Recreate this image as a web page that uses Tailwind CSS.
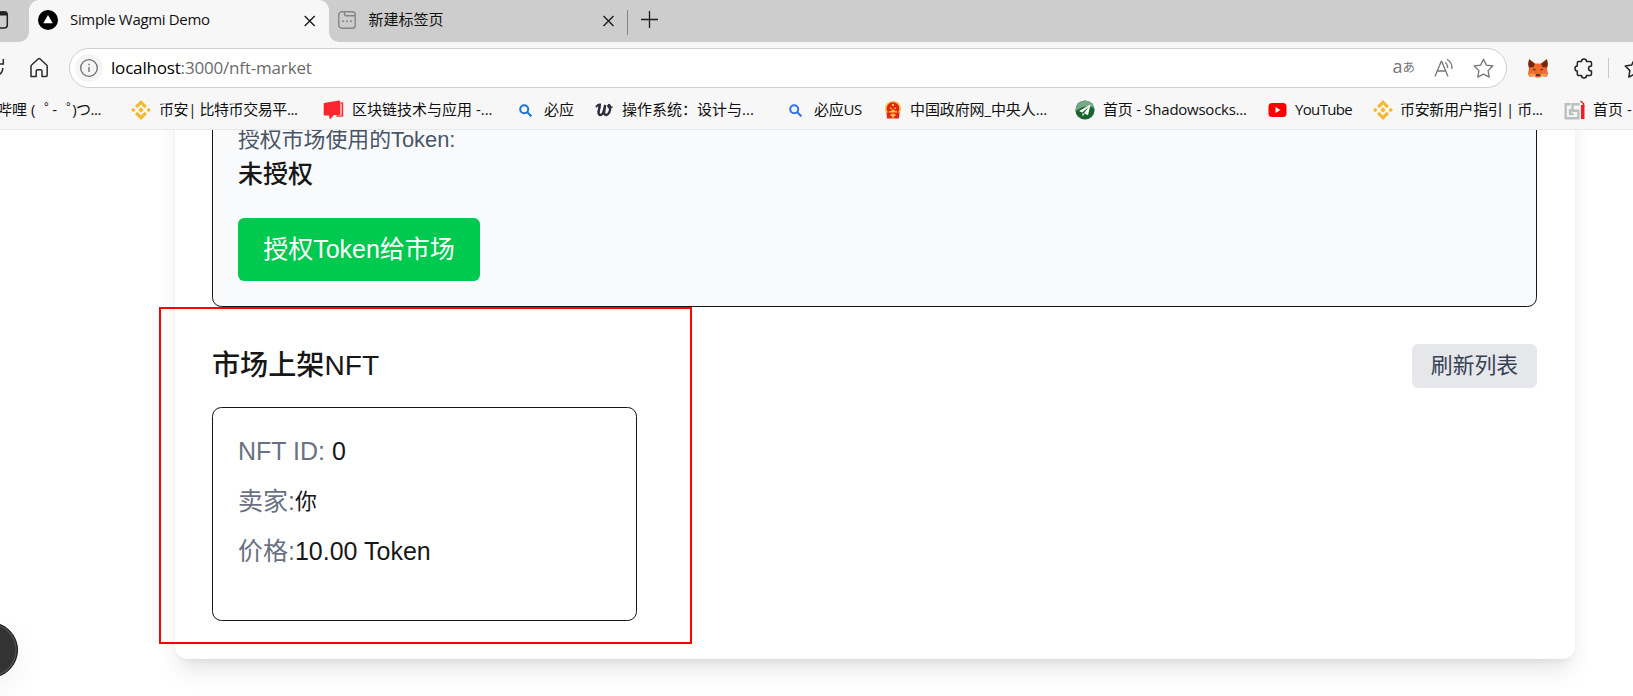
<!DOCTYPE html>
<html lang="zh-CN">
<head>
<meta charset="utf-8">
<title>Simple Wagmi Demo</title>
<script src="https://cdn.jsdelivr.net/npm/@tailwindcss/browser@4"></script>
</head>
<body class="w-[1633px] h-[696px] overflow-hidden bg-white relative font-['Liberation_Sans','Noto_Sans_CJK_SC',sans-serif] text-[#171717]">

<header class="relative z-10 h-[130px] bg-[#f7f7f7] border-b border-[#e8e9eb] font-['Open_Sans','Noto_Sans_CJK_SC',sans-serif] text-[15px] text-[#111]">
  <!-- tab strip -->
  <div class="h-[42px] flex bg-[#f7f7f7]">
    <div class="w-[29px] h-[42px] bg-[#cdcdcd] rounded-br-[10px] shrink-0">
      <svg width="29" height="42" fill="none" stroke="#222" stroke-width="1.5"><rect x="-8" y="12" width="15.3" height="16" rx="3"/><path d="M-4 13.5H7" stroke-width="4"/></svg>
    </div>
    <div class="w-[300px] shrink-0 bg-[#cdcdcd]">
      <div class="h-[42px] bg-[#f7f7f7] rounded-t-[10px] flex items-center pl-[9px] pr-[11px] pb-[3px]">
        <svg width="20" height="20" viewBox="0 0 20 20"><circle cx="10" cy="10" r="10"/><path d="M10 5l4.700 8.300H5.300z" fill="#fff"/></svg>
        <span class="ml-3 tracking-[-0.33px] whitespace-nowrap">Simple Wagmi Demo</span>
        <svg class="ml-auto" width="16" height="16" viewBox="0 0 16 16" stroke="#1b1b1b" stroke-width="1.4"><path d="M2.700 4l10 10M12.700 4l-10 10"/></svg>
      </div>
    </div>
    <div class="grow h-[42px] bg-[#cdcdcd] rounded-bl-[10px] flex items-center pl-[9px] pb-[3px]">
      <svg width="18" height="18" viewBox="0 0 18 18" fill="none" stroke="#858585" stroke-width="1.4"><rect x=".8" y=".8" width="16.400" height="16.400" rx="3"/><path d="M6.500 1v2q0 1.800 1.800 1.800H17"/><g fill="#858585" stroke="none"><circle cx="5" cy="10.300" r="1"/><circle cx="9" cy="10.300" r="1"/><circle cx="13" cy="10.300" r="1"/></g></svg>
      <span class="ml-[12.500px] w-[232.500px] -mt-px">新建标签页</span>
      <svg width="16" height="16" viewBox="0 0 16 16" stroke="#1b1b1b" stroke-width="1.400"><path d="M2.500 4l10 10M12.500 4l-10 10"/></svg>
      <div class="ml-[10px] mt-[5px] w-px h-[25px] bg-[#858585]"></div>
      <svg class="ml-3" width="19" height="19" stroke="#1b1b1b" stroke-width="1.300"><path d="M1 9.500H18M9.500 1V18"/></svg>
    </div>
  </div>

  <!-- toolbar -->
  <div class="h-[52px] flex items-center">
    <svg class="shrink-0" width="69" height="40" viewBox="0 0 69 40" fill="none" stroke="#2b2b2b" stroke-width="1.500"><path d="M3.300 11v5H-2M2.800 20q0 5.500-6 8"/><path d="M31 28.500V18.300q0-.8.600-1.300l6.500-6q1-.9 2 0l6.500 6q.6.500.6 1.300v9q0 1.200-1.200 1.200H42v-5.300q0-1.400-1.400-1.400h-3q-1.400 0-1.400 1.400v5.300z" stroke-linejoin="round"/></svg>
    <div class="w-[1438px] h-[40px] shrink-0 rounded-full border border-[#cfcfcf] bg-white flex items-center pl-[5px] pr-3">
      <div class="size-[28px] rounded-full bg-[#f5f5f5] flex items-center justify-center">
        <svg width="18" height="18" viewBox="0 0 18 18" fill="none" stroke="#6b6b6b" stroke-width="1.300"><circle cx="9" cy="9" r="8.300"/><path d="M9 8v5M9 4.800v1.500"/></svg>
      </div>
      <span class="ml-[8px] text-[17px] tracking-[-0.18px] text-black">localhost<span class="text-[#6b6b6b]">:3000/nft-market</span></span>
      <div class="ml-auto flex items-center text-[#767676]">
        <span class="text-[18px] leading-5 -mt-[4px]">a</span><span class="text-[12.500px] leading-5 -mt-[3px] font-['Noto_Sans_CJK_JP',sans-serif]">あ</span>
        <svg class="ml-[19px] -mt-px" width="20" height="20" viewBox="0 0 20 20" fill="none" stroke="#767676" stroke-width="1.300"><path d="M1 18.500L7.200 3.500h.5L14 18.500M3.200 13h8.500M11 4.500q3 2 2.500 5.500M13 1.200q5.500 3.500 5 9.800"/></svg>
        <svg class="ml-[19px]" width="21" height="21" viewBox="0 0 21 21" fill="none" stroke="#767676" stroke-width="1.300" stroke-linejoin="round"><path d="M10.500 1.200l2.900 5.900 6.400.9-4.700 4.600 1.100 6.500-5.700-3-5.700 3 1.100-6.500L1.200 8l6.400-.9z"/></svg>
      </div>
    </div>
    <svg class="ml-[21px] shrink-0" width="20" height="19" viewBox="0 0 20 19"><path d="M1 0l6 4.500h6L19 0l1 5-1 5 1 5-1.500 3-4.500-1-2 1.500H8L6 17l-4.500 1L0 15l1-5-1-5z" fill="#f5682a"/><path d="M1.200.3l5.600 4.400-1 3.300L1 8.500.3 5zM18.800.3l-5.600 4.400 1 3.300 4.800.5.700-3.500z" fill="#6e2b12"/><path d="M1 15l4-1 3 2-2 1.200-4 .8z" fill="#ff9a4a"/><path d="M19 15l-4-1-3 2 2 1.200 4 .8z" fill="#ff9a4a"/><path d="M4.500 9.500l3.500 1-1.500 1.300zM15.500 9.500l-3.500 1 1.500 1.300zM8 15.300h4v1.700H8z" fill="#2b3145"/></svg>
    <svg class="ml-[26px] shrink-0" width="20" height="21" viewBox="0 0 20 21" fill="none" stroke="#242424" stroke-width="1.500" stroke-linejoin="round"><path d="M4.500 3.500h3Q7.500 1 10 1t2.500 2.500H16q1.500 0 1.500 1.500v3q-3 0-3 2.500t3 2.500v3q0 1.500-1.500 1.500h-3.500Q12.500 20 10 20t-2.500-2.500h-3q-1.200 0-1.200-1.500v-3Q1 13 1 10.500T3.300 8V5q0-1.500 1.200-1.500z"/></svg>
    <div class="ml-[14px] w-px h-5 bg-[#c8c8c8] shrink-0"></div>
    <svg class="ml-[15px] shrink-0" width="21" height="21" viewBox="0 0 21 21" fill="none" stroke="#242424" stroke-width="1.500" stroke-linejoin="round"><path d="M10.500 1.200L7.600 7.100 1.200 8l4.700 4.600-1.100 6.500 5.700-3"/></svg>
  </div>

  <!-- bookmarks -->
  <nav class="h-[32px] flex items-center whitespace-nowrap overflow-hidden text-[15px] text-[#111] [&>div]:shrink-0 [&>div]:flex [&>div]:items-center [&_svg]:shrink-0 [&_span]:-mt-[2px]">
    <div class="w-[131px]"><span class="ml-[-3px]">哔哩 (</span><span class="ml-[9px] w-[9px] flex">゜</span><span class="-ml-px">-</span><span class="ml-[9px] w-[7px] flex">゜</span><span class="-ml-px tracking-[-0.500px]">)つ...</span></div>
    <div class="w-[192px]"><svg width="20" height="20" viewBox="0 0 20 20" fill="#f3ba2f"><path d="M10 0l6 6-2.300 2.300L10 4.600 6.300 8.300 4 6zM10 20l6-6-2.300-2.300-3.700 3.700-3.700-3.700L4 14zM10 7.200l2.800 2.800-2.800 2.800L7.200 10zM2.300 7.700L4.600 10l-2.300 2.300L0 10zM17.700 7.700L20 10l-2.300 2.300-2.300-2.300z"/></svg><span class="ml-2 tracking-[-0.42px]">币安| 比特币交易平...</span></div>
    <div class="w-[196px]"><svg width="21" height="20" viewBox="0 0 21 20"><path d="M16 2h4.500v15H13z" fill="#f9a3a3"/><path d="M1 3l15-2.500q1 0 1 1V14q0 1-1 1h-5l-4 4.500-1-4H1.500q-.8 0-.8-1V4z" fill="#fb2530"/><path d="M17.500 3h2v13h-6" fill="none" stroke="#fb2530"/></svg><span class="ml-2">区块链技术与应用 -...</span></div>
    <div class="w-[76px]"><svg width="13" height="13" viewBox="0 0 13 13" fill="none" stroke="#1976d2" stroke-width="2"><circle cx="5.200" cy="5.200" r="4"/><path d="M8 8l4.400 4.400"/></svg><span class="ml-3">必应</span></div>
    <div class="w-[194px]"><svg width="18" height="14" viewBox="0 0 18 14" fill="none" stroke="#2d2d3d" stroke-linecap="round"><path d="M1.500 3.500Q3 1 5 1.500L3.500 9" stroke-width="2"/><path d="M4.600 3L3.600 9q-.3 3 2 3Q8 11.500 9 7l1.200-5L9.200 9q-.3 3 1.900 3Q14 11.500 15 7q.8-4-1-5" stroke-width="2.300"/><path d="M14 2q-2 .6-.5 2.300 1.500 1.200 3.500-.3" stroke-width="1.500"/></svg><span class="ml-[9px]">操作系统：设计与...</span></div>
    <div class="w-[95px]"><svg width="13" height="13" viewBox="0 0 13 13" fill="none" stroke="#3471ee" stroke-width="2"><circle cx="5.200" cy="5.200" r="4"/><path d="M8 8l4.400 4.400"/></svg><span class="ml-3 tracking-[-0.3px]">必应US</span></div>
    <div class="w-[191px]"><svg width="18" height="18" viewBox="0 0 18 18"><circle cx="9" cy="8" r="8" fill="#f2c13c"/><circle cx="9" cy="7.500" r="6.300" fill="#e3241b"/><path d="M2.500 11.500h13l-.5 6H3z" fill="#e3241b"/><path d="M5 10h8v1.500H5zM8 3h2v2H8zM6 6.500h1.500V8H6zM10.500 6.500H12V8h-1.500zM7.500 8.500h3V10h-3zM6 14q3-3 6 0-3 3-6 0zM8.300 15h1.400v2.500H8.300z" fill="#f6c73b"/></svg><span class="ml-2 tracking-[-0.1px]">中国政府网_中央人...</span></div>
    <div class="w-[193px]"><svg width="20" height="20" viewBox="0 0 20 20"><circle cx="10" cy="10" r="9.600" fill="#176531"/><path d="M1 8Q3 1 10 .8T19 8Q10 4 1 11z" fill="#76a986"/><path d="M15.500 4.500L4 11l3.300 1.500L14 6.500 9 13.300l4 2z" fill="#fff"/><path d="M7.500 13v3.500l1.800-2.600z" fill="#fff"/></svg><span class="ml-2 tracking-[-0.25px]">首页 - Shadowsocks...</span></div>
    <div class="w-[105px]"><svg width="19" height="14" viewBox="0 0 19 14"><rect x=".5" width="18" height="14" rx="3.500" fill="#f00"/><path d="M7.500 4l5 3-5 3z" fill="#fff"/></svg><span class="ml-2 tracking-[-0.65px]">YouTube</span></div>
    <div class="w-[191px]"><svg width="20" height="20" viewBox="0 0 20 20" fill="#f3ba2f"><path d="M10 0l6 6-2.300 2.300L10 4.600 6.300 8.300 4 6zM10 20l6-6-2.300-2.300-3.700 3.700-3.700-3.700L4 14zM10 7.200l2.800 2.800-2.800 2.800L7.200 10zM2.300 7.700L4.600 10l-2.300 2.300L0 10zM17.700 7.700L20 10l-2.300 2.300-2.300-2.300z"/></svg><span class="ml-[7px] tracking-[-0.37px]">币安新用户指引 | 币...</span></div>
    <div class="w-[90px]"><svg width="21" height="20" viewBox="0 0 21 20" fill="none" stroke="#b9c0c0" stroke-width="2.400"><path d="M6.500 4.300H1.700V18.300H14.300V10.700H8.500V4.300H15.500M6 9v5H9.500"/><path d="M18.700 5v14" stroke="#e8202a" stroke-width="3.600"/><path d="M16.500 1l3 2.500v3" stroke="#e8202a" stroke-width="1.500"/></svg><span class="ml-2">首页 -</span></div>
  </nav>
</header>

<!-- page -->
<main class="h-[566px] overflow-hidden">
  <div class="w-[1400px] h-[588.500px] mt-[-60px] ml-[175px] pl-[37px] pr-[38px] pt-[29px] rounded-[12.500px] bg-white shadow-[0_15.600px_23.400px_-4.700px_rgba(0,0,0,0.1),0_6.250px_9.400px_-6.250px_rgba(0,0,0,0.1)]">
    <section class="h-[208px] border border-[#171717] rounded-[9.400px] bg-[#f9fafb] px-[25px] pt-6">
      <p class="text-[21.875px] leading-[31px] text-[#4a5565]">授权市场使用的Token:</p>
      <p class="text-[25px] leading-[38px]"><span class="font-medium">未授权</span></p>
      <button class="mt-[25px] block h-[63px] w-[242px] pb-[2px] rounded-[6.250px] bg-[#00c950] text-white text-[25px] leading-[38px]">授权Token给市场</button>
    </section>
    <div class="mt-[37px] h-[44px] flex items-center justify-between">
      <h2 class="text-[28.125px] leading-[44px] font-medium">市场上架NFT</h2>
      <button class="h-[44px] w-[125px] pb-px rounded-[6.250px] bg-[#e5e7eb] text-[#364153] text-[21.875px] leading-[31px]">刷新列表</button>
    </div>
    <article class="mt-[19px] w-[425px] h-[214px] border border-[#171717] rounded-[9.400px] p-[25px] flex flex-col gap-[12.500px] text-[25px] leading-[37.500px]">
      <p><span class="text-[#6a7282]">NFT ID:</span> <span>0</span></p>
      <p class="flex items-center"><span class="text-[#6a7282]">卖家:</span><span class="text-[21.875px]">你</span></p>
      <p class="flex"><span class="text-[#6a7282]">价格:</span><span>10.00 Token</span></p>
    </article>
  </div>
</main>

<!-- floating dev indicator and highlight frame -->
<div class="absolute left-[-38.500px] top-[622px] size-[56px] rounded-full bg-[#333] border border-[#111] shadow-[inset_0_0_0_1.500px_#505050,0_12px_32px_rgba(0,0,0,0.06)]"></div>
<div class="absolute left-[159px] top-[307px] w-[533px] h-[337px] border-2 border-[#ff0000]"></div>
</body>
</html>
